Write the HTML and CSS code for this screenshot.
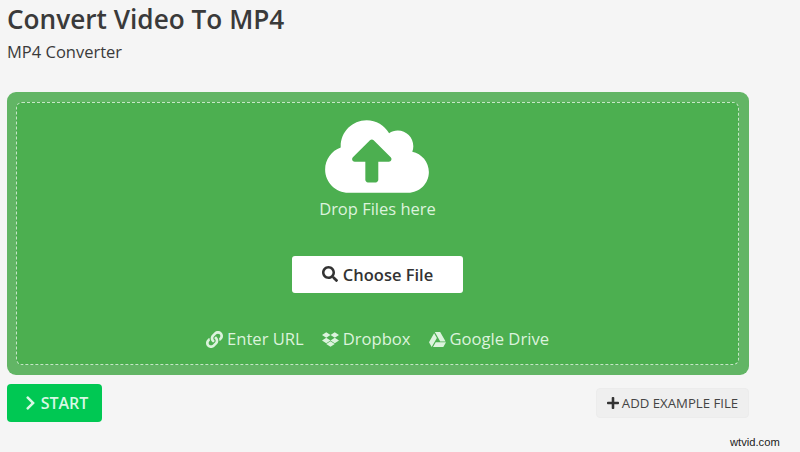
FILE: index.html
```html
<!DOCTYPE html>
<html>
<head>
    <title>Convert Video To MP4</title>
    <link rel="stylesheet" href="styles.css">
</head>
<body>
    <div class="page">
        <h1 class="title">Convert Video To MP4</h1>
        <p class="subtitle">MP4 Converter</p>

        <div class="panel">
            <div class="drop-area">
                <svg class="cloud" viewBox="0 0 640 512"><path d="M537.6 226.6c4.1-10.7 6.4-22.4 6.4-34.6 0-53-43-96-96-96-19.7 0-38.1 6-53.3 16.2C367 64.2 315.3 32 256 32c-88.4 0-160 71.6-160 160 0 2.7.1 5.4.2 8.1C40.2 219.8 0 273.2 0 336c0 79.5 64.5 144 144 144h368c70.7 0 128-57.3 128-128 0-61.9-44-113.6-102.4-125.4zM393.4 288H328v112c0 8.8-7.2 16-16 16h-48c-8.8 0-16-7.2-16-16V288h-65.4c-14.3 0-21.4-17.2-11.3-27.3l105.4-105.4c6.2-6.2 16.4-6.2 22.6 0l105.4 105.4c10.1 10.1 3 27.3-11.3 27.3z"/></svg>
                <div class="drop-text">Drop Files here</div>
                <a class="choose-btn" href="#">
                    <svg class="icon" viewBox="0 0 512 512"><path d="M505 442.7L405.3 343c-4.5-4.5-10.6-7-17-7H372c27.6-35.3 44-79.7 44-128C416 93.1 322.9 0 208 0S0 93.1 0 208s93.1 208 208 208c48.3 0 92.7-16.4 128-44v16.3c0 6.4 2.5 12.5 7 17l99.7 99.7c9.4 9.4 24.6 9.4 33.9 0l28.3-28.3c9.4-9.4 9.4-24.6.1-34zM208 336c-70.7 0-128-57.2-128-128 0-70.7 57.2-128 128-128 70.7 0 128 57.2 128 128 0 70.7-57.2 128-128 128z"/></svg>
                    Choose File
                </a>
                <div class="sources">
                    <a href="#">
                        <svg class="icon" viewBox="0 0 512 512"><path d="M326.612 185.391c59.747 59.809 58.927 155.698.36 214.59-.11.12-.24.25-.36.37l-67.2 67.2c-59.27 59.27-155.699 59.262-214.96 0-59.27-59.26-59.27-155.7 0-214.96l37.106-37.106c9.84-9.84 26.786-3.3 27.294 10.606.648 17.722 3.826 35.527 9.69 52.721 1.986 5.822.567 12.262-3.783 16.612l-13.087 13.087c-28.026 28.026-28.905 73.66-1.155 101.96 28.024 28.579 74.086 28.749 102.325.51l67.2-67.19c28.191-28.191 28.073-73.757 0-101.83-3.701-3.694-7.429-6.564-10.341-8.569a16.037 16.037 0 0 1-6.947-12.606c-.396-10.567 3.348-21.456 11.698-29.806l21.054-21.055c5.521-5.521 14.182-6.199 20.584-1.731a152.482 152.482 0 0 1 20.522 17.197zM467.547 44.449c-59.261-59.262-155.69-59.27-214.96 0l-67.2 67.2c-.12.12-.25.25-.36.37-58.566 58.892-59.387 154.781.36 214.59a152.454 152.454 0 0 0 20.521 17.196c6.402 4.468 15.064 3.789 20.584-1.731l21.054-21.055c8.35-8.35 12.094-19.239 11.698-29.806a16.037 16.037 0 0 0-6.947-12.606c-2.912-2.005-6.64-4.875-10.341-8.569-28.073-28.073-28.191-73.639 0-101.83l67.2-67.19c28.239-28.239 74.3-28.069 102.325.51 27.75 28.3 26.872 73.934-1.155 101.96l-13.087 13.087c-4.35 4.35-5.769 10.79-3.783 16.612 5.864 17.194 9.042 34.999 9.69 52.721.509 13.906 17.454 20.446 27.294 10.606l37.106-37.106c59.271-59.259 59.271-155.699.001-214.959z"/></svg>
                        Enter URL
                    </a>
                    <a href="#">
                        <svg class="icon" viewBox="0 0 528 512"><path d="M264.4 116.3l-132 84.3 132 84.3-132 84.3L0 284.1l132.3-84.3L0 116.3 132.3 32l132.1 84.3zM131.6 395.7l132-84.3 132 84.3-132 84.3-132-84.3zm132.8-111.6l132-84.3-132-83.6L395.7 32 528 116.3l-132.3 84.3L528 284.8l-132.3 84.3-131.3-85z"/></svg>
                        Dropbox
                    </a>
                    <a href="#">
                        <svg class="icon" viewBox="0 0 512 512"><path d="M339 314.9L175.4 32h161.2l163.6 282.9H339zm-137.5 23.6L120.9 480h310.5L512 338.5H201.5zM154.1 67.4L0 338.5 80.6 480 237 208.8 154.1 67.4z"/></svg>
                        Google Drive
                    </a>
                </div>
            </div>
        </div>

        <div class="actions">
            <a class="start-btn" href="#">
                <svg class="icon" viewBox="0 0 320 512"><path d="M285.476 272.971L91.132 467.314c-9.373 9.373-24.569 9.373-33.941 0l-22.667-22.667c-9.357-9.357-9.375-24.522-.04-33.901L188.505 256 34.484 101.255c-9.335-9.379-9.317-24.544.04-33.901l22.667-22.667c9.373-9.373 24.569-9.373 33.941 0L285.475 239.03c9.373 9.372 9.373 24.568.001 33.941z"/></svg>
                START
            </a>
            <a class="example-btn" href="#">
                <svg class="icon" viewBox="0 0 448 512"><path d="M416 208H272V64c0-17.67-14.33-32-32-32h-32c-17.67 0-32 14.33-32 32v144H32c-17.67 0-32 14.33-32 32v32c0 17.67 14.33 32 32 32h144v144c0 17.67 14.33 32 32 32h32c17.67 0 32-14.33 32-32V304h144c17.67 0 32-14.33 32-32v-32c0-17.67-14.33-32-32-32z"/></svg>
                ADD EXAMPLE FILE
            </a>
        </div>
    </div>
    <div class="watermark">wtvid.com</div>
</body>
</html>
```

FILE: styles.css
```css
* {
    margin: 0;
    padding: 0;
    box-sizing: border-box;
}

html, body {
    height: 452px;
    overflow: hidden;
}

body {
    background: #f5f5f5;
    color: #3a3a3a;
    font-family: "Open Sans", "Liberation Sans", sans-serif;
    position: relative;
}

a {
    text-decoration: none;
}

.icon {
    fill: currentColor;
    display: block;
    flex-shrink: 0;
}

.page {
    width: 742px;
    margin-left: 7px;
}

.title {
    font-size: 26.2px;
    font-weight: 600;
    line-height: 38px;
}

.subtitle {
    font-size: 16.5px;
    line-height: 22px;
    margin-top: 3px;
}

.panel {
    height: 283px;
    margin-top: 29px;
    padding: 10px 10px 10px 9px;
    background: #62b565;
    border-radius: 9px;
}

.drop-area {
    height: 263px;
    background: #4caf50;
    border: 1px dashed #c6e6c7;
    border-radius: 6px;
    display: flex;
    flex-direction: column;
    align-items: center;
    color: #dcf3dd;
}

.cloud {
    display: block;
    width: 104px;
    height: 83px;
    margin-top: 12px;
    margin-left: -1px;
    fill: #fff;
}

.drop-text {
    font-size: 16.5px;
    line-height: 22px;
}

.choose-btn {
    width: 171px;
    height: 37px;
    margin-top: 36px;
    padding-bottom: 1px;
    background: #fff;
    border-radius: 3px;
    color: #333;
    font-size: 16.5px;
    font-weight: 600;
    display: flex;
    align-items: center;
    justify-content: center;
    gap: 5px;
}

.choose-btn .icon {
    width: 16px;
    height: 16px;
}

.sources {
    display: flex;
    gap: 18px;
    margin-top: 34px;
    font-size: 16.6px;
    line-height: 24px;
}

.sources a {
    color: #dcf3dd;
    display: flex;
    align-items: center;
    gap: 4px;
}

.sources .icon {
    width: 17px;
    height: 17px;
}

.actions {
    display: flex;
    justify-content: space-between;
    align-items: flex-start;
    margin-top: 9px;
}

.start-btn {
    width: 95px;
    height: 38px;
    padding-left: 4px;
    background: #00c853;
    border-radius: 4px;
    color: #d8f8e4;
    font-size: 16px;
    font-weight: 600;
    display: flex;
    align-items: center;
    justify-content: center;
    gap: 5px;
}

.start-btn .icon {
    width: 11px;
    height: 16px;
}

.example-btn {
    width: 153px;
    height: 30px;
    margin-top: 4px;
    background: #efefef;
    border: 1px solid #ececec;
    border-radius: 4px;
    color: #444;
    font-size: 13.2px;
    display: flex;
    align-items: center;
    justify-content: center;
    gap: 3px;
}

.example-btn .icon {
    width: 12px;
    height: 14px;
    color: #333;
}

.watermark {
    position: absolute;
    left: 730px;
    top: 434px;
    font-family: "Liberation Sans", sans-serif;
    font-size: 11.2px;
    line-height: 16px;
    color: #222;
}
```
